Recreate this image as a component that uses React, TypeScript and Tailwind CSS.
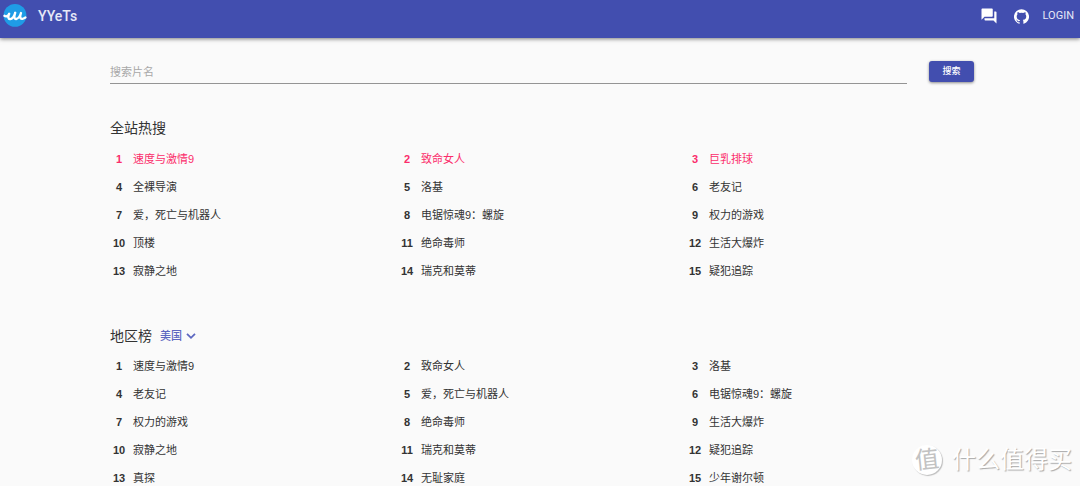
import React, { useState } from 'react';

const SITE_HOT = [
  '速度与激情9', '致命女人', '巨乳排球',
  '全裸导演', '洛基', '老友记',
  '爱，死亡与机器人', '电锯惊魂9：螺旋', '权力的游戏',
  '顶楼', '绝命毒师', '生活大爆炸',
  '寂静之地', '瑞克和莫蒂', '疑犯追踪',
];

const REGION_HOT = [
  '速度与激情9', '致命女人', '洛基',
  '老友记', '爱，死亡与机器人', '电锯惊魂9：螺旋',
  '权力的游戏', '绝命毒师', '生活大爆炸',
  '寂静之地', '瑞克和莫蒂', '疑犯追踪',
  '真探', '无耻家庭', '少年谢尔顿',
];

function Logo() {
  return (
    <svg viewBox="0 0 24 24" className="size-6" aria-hidden="true">
      <circle cx="12" cy="11.4" r="11.4" fill="#1f9ce6" />
      <path
        d="M1.4 11.8C2.8 12.8 5 12.4 6.2 9.8C4.8 13 5.2 15.4 7.2 15.1C9.6 14.7 11.2 12 12.2 8.8C10.8 12.8 11.2 15.3 13.2 15C15.6 14.6 17 12 18 9C16.6 12.8 17.2 15.2 19.4 14.8C20.6 14.6 21.4 14 22.4 13.4"
        fill="none"
        stroke="#fff"
        strokeWidth="2.3"
        strokeLinecap="round"
        strokeLinejoin="round"
      />
    </svg>
  );
}

function ForumIcon() {
  return (
    <svg viewBox="0 0 24 24" className="size-[18px]" fill="currentColor" aria-hidden="true">
      <path d="M21 6h-2v9H6v2c0 .55.45 1 1 1h11l4 4V7c0-.55-.45-1-1-1zm-4 6V3c0-.55-.45-1-1-1H3c-.55 0-1 .45-1 1v14l4-4h10c.55 0 1-.45 1-1z" />
    </svg>
  );
}

function GitHubIcon() {
  return (
    <svg viewBox="0 0 24 24" className="size-[15px]" fill="currentColor" aria-hidden="true">
      <path d="M12 .3a12 12 0 0 0-3.8 23.4c.6.1.8-.3.8-.6v-2c-3.3.7-4-1.6-4-1.6-.6-1.4-1.4-1.8-1.4-1.8-1-.7.1-.7.1-.7 1.2 0 1.9 1.2 1.9 1.2 1 1.8 2.8 1.3 3.5 1 0-.8.4-1.3.7-1.6-2.7-.3-5.5-1.3-5.5-6 0-1.2.5-2.3 1.3-3.1-.2-.4-.6-1.6 0-3.2 0 0 1-.3 3.4 1.2a11.5 11.5 0 0 1 6 0c2.3-1.5 3.3-1.2 3.3-1.2.6 1.6.2 2.8 0 3.2.9.8 1.3 1.9 1.3 3.2 0 4.6-2.8 5.6-5.5 5.9.5.4.9 1 .9 2.2v3.3c0 .3.1.7.8.6A12 12 0 0 0 12 .3" />
    </svg>
  );
}

function RankList({ items, highlight = 0 }: { items: string[]; highlight?: number }) {
  return (
    <ol className="grid grid-cols-3 text-[11px] leading-7">
      {items.map((title, i) => (
        <li key={title} className={i < highlight ? 'flex text-[#fb2d6b]' : 'flex text-[#333]'}>
          <span className="w-[18px] text-center font-bold">{i + 1}</span>
          <a href="#" className="ml-[5px]">{title}</a>
        </li>
      ))}
    </ol>
  );
}

export default function App() {
  const [query, setQuery] = useState('');
  return (
    <div className="relative h-screen overflow-hidden bg-[#fafafa] font-['Liberation_Sans','Noto_Sans_CJK_SC',sans-serif] text-[#333]">
      <header className="flex h-[38px] items-center bg-[#424eaf] pr-[6px] pb-[6px] pl-[3px] text-white shadow-[0_1px_4px_rgba(0,0,0,0.5)]">
        <a href="#" className="flex items-center gap-[11px] font-['Roboto',sans-serif] text-[14px] leading-5 font-medium text-[#e6e8f7]">
          <Logo />
          YYeTs
        </a>
        <nav className="ml-auto flex items-center">
          <a href="#" aria-label="讨论"><ForumIcon /></a>
          <a href="#" aria-label="GitHub" className="ml-4"><GitHubIcon /></a>
          <a href="#" className="ml-[14px] font-['Roboto',sans-serif] text-[11px] leading-4 text-[#e6e8f7]">LOGIN</a>
        </nav>
      </header>

      <main className="pr-[106px] pl-[110px]">
        <form className="flex items-start pt-[23px]" onSubmit={(e) => e.preventDefault()}>
          <input
            type="text"
            aria-label="搜索片名"
            placeholder="搜索片名"
            value={query}
            onChange={(e) => setQuery(e.target.value)}
            className="h-[23px] min-w-0 flex-1 border-b border-[#949494] bg-transparent text-[11px] outline-none placeholder:text-[#a8a8a8]"
          />
          <button
            type="submit"
            className="ml-[22px] h-[21px] w-[45px] rounded-[3px] bg-[#424eaf] text-[9px] font-medium text-white shadow-[0_1px_3px_rgba(0,0,0,0.45)]"
          >
            搜索
          </button>
        </form>

        <section className="mt-[34px]">
          <h2 className="mb-[7px] text-[14px] leading-5">全站热搜</h2>
          <RankList items={SITE_HOT} highlight={3} />
        </section>

        <section className="mt-[41px]">
          <div className="mb-[6px] flex items-center">
            <h2 className="text-[14px] leading-5">地区榜</h2>
            <div className="relative ml-2 flex items-center text-[#5c67c0]">
              <select
                aria-label="地区"
                className="appearance-none bg-transparent pr-[14px] text-[11px] leading-5 font-medium outline-none"
              >
                <option>美国</option>
              </select>
              <svg viewBox="0 0 10 8" className="pointer-events-none absolute right-0 h-2 w-[10px]" aria-hidden="true">
                <path d="M1 1.8L5 5.8L9 1.8" fill="none" stroke="currentColor" strokeWidth="1.8" />
              </svg>
            </div>
          </div>
          <RankList items={REGION_HOT} />
        </section>
      </main>

      <div className="pointer-events-none absolute right-2 bottom-2 flex items-center gap-[10px] select-none">
        <span className="flex size-[30px] items-center justify-center rounded-full bg-white text-[24px] leading-none text-[#c2c2c2] shadow-[1px_1px_1px_#bdbdbd]">
          <span className="-rotate-6">值</span>
        </span>
        <span className="text-[24px] leading-9 text-white [text-shadow:1px_1px_1px_#a8a8a8]">什么值得买</span>
      </div>
    </div>
  );
}
